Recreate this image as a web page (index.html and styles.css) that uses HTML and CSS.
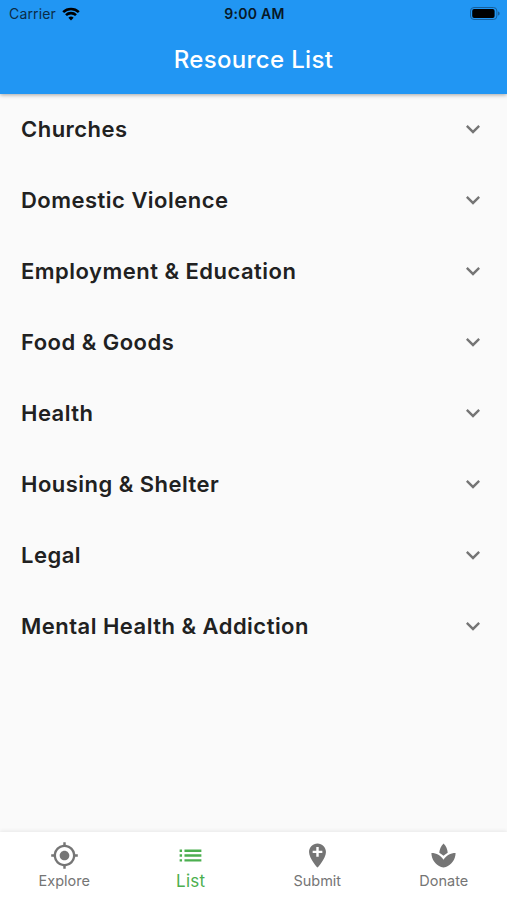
FILE: index.html
```html
<!DOCTYPE html>
<html lang="en">
<head>
    <meta charset="UTF-8">
    <title>Resource List</title>
    <link rel="stylesheet" href="styles.css">
</head>
<body>
<div class="header">
    <div class="status">
        <div class="carrier">
            <span>Carrier</span>
            <svg class="wifi" viewBox="0 0 18 14">
                <path d="M1.2 5.1a11.3 11.3 0 0 1 15.6 0M4 8.1a7.2 7.2 0 0 1 10 0"/>
                <path class="dot" d="M9 13.6l-2.6-2.8a3.8 3.8 0 0 1 5.2 0z"/>
            </svg>
        </div>
        <div class="time">9:00 AM</div>
        <svg class="battery" viewBox="0 0 30 13">
            <rect class="shell" x=".5" y=".5" width="26.4" height="12" rx="3.5"/>
            <rect x="2.2" y="2" width="22.4" height="9" rx="2"/>
            <path class="cap" d="M28 4.5c2.2.6 2.2 3.4 0 4z"/>
        </svg>
    </div>
    <h1 class="title">Resource List</h1>
</div>
<ul class="list">
    <li><span>Churches</span><svg viewBox="0 0 24 24"><path d="M16.59 8.59L12 13.17 7.41 8.59 6 10l6 6 6-6z"/></svg></li>
    <li><span>Domestic Violence</span><svg viewBox="0 0 24 24"><path d="M16.59 8.59L12 13.17 7.41 8.59 6 10l6 6 6-6z"/></svg></li>
    <li><span>Employment &amp; Education</span><svg viewBox="0 0 24 24"><path d="M16.59 8.59L12 13.17 7.41 8.59 6 10l6 6 6-6z"/></svg></li>
    <li><span>Food &amp; Goods</span><svg viewBox="0 0 24 24"><path d="M16.59 8.59L12 13.17 7.41 8.59 6 10l6 6 6-6z"/></svg></li>
    <li><span>Health</span><svg viewBox="0 0 24 24"><path d="M16.59 8.59L12 13.17 7.41 8.59 6 10l6 6 6-6z"/></svg></li>
    <li><span>Housing &amp; Shelter</span><svg viewBox="0 0 24 24"><path d="M16.59 8.59L12 13.17 7.41 8.59 6 10l6 6 6-6z"/></svg></li>
    <li><span>Legal</span><svg viewBox="0 0 24 24"><path d="M16.59 8.59L12 13.17 7.41 8.59 6 10l6 6 6-6z"/></svg></li>
    <li><span>Mental Health &amp; Addiction</span><svg viewBox="0 0 24 24"><path d="M16.59 8.59L12 13.17 7.41 8.59 6 10l6 6 6-6z"/></svg></li>
</ul>
<div class="tabs">
    <a class="tab">
        <svg viewBox="0 0 24 24"><path d="M12 8c-2.21 0-4 1.79-4 4s1.79 4 4 4 4-1.79 4-4-1.79-4-4-4zm8.94 3A8.994 8.994 0 0 0 13 3.06V1h-2v2.06A8.994 8.994 0 0 0 3.06 11H1v2h2.06A8.994 8.994 0 0 0 11 20.94V23h2v-2.06A8.994 8.994 0 0 0 20.94 13H23v-2h-2.06zM12 19c-3.87 0-7-3.13-7-7s3.13-7 7-7 7 3.13 7 7-3.13 7-7 7z"/></svg>
        <span>Explore</span>
    </a>
    <a class="tab current">
        <svg viewBox="0 0 24 24"><path d="M3 13h2v-2H3v2zm0 4h2v-2H3v2zm0-8h2V7H3v2zm4 4h14v-2H7v2zm0 4h14v-2H7v2zM7 7v2h14V7H7z"/></svg>
        <span>List</span>
    </a>
    <a class="tab">
        <svg viewBox="0 0 24 24"><path d="M12 2C8.14 2 5 5.14 5 9c0 5.25 7 13 7 13s7-7.75 7-13c0-3.86-3.14-7-7-7zm4 8h-3v3h-2v-3H8V8h3V5h2v3h3v2z"/></svg>
        <span>Submit</span>
    </a>
    <a class="tab">
        <svg viewBox="0 0 24 24"><path d="M15.49 9.63c-.18-2.79-1.31-5.51-3.43-7.63-2.14 2.14-3.32 4.86-3.55 7.63 1.28.68 2.46 1.56 3.49 2.63 1.03-1.06 2.21-1.94 3.49-2.63zM12 15.45C9.85 12.17 6.18 10 2 10c0 5.32 3.36 9.82 8.03 11.49.63.23 1.29.4 1.97.51.68-.12 1.33-.29 1.97-.51C18.64 19.82 22 15.32 22 10c-4.18 0-7.85 2.17-10 5.45z"/></svg>
        <span>Donate</span>
    </a>
</div>
</body>
</html>
```
FILE: styles.css
```css
* {
    margin: 0;
    padding: 0;
    box-sizing: border-box;
}

body {
    display: flex;
    flex-direction: column;
    height: 900px;
    overflow: hidden;
    background-color: #fafafa;
    font-family: Inter, "Liberation Sans", sans-serif;
}

svg {
    display: block;
    fill: currentColor;
}

.header {
    height: 94px;
    background-color: #2196f3;
    box-shadow: 0 1px 4px rgba(0, 0, 0, .35);
}

.status {
    display: grid;
    grid-template-columns: 1fr auto 1fr;
    align-items: center;
    height: 27px;
    padding: 0 7px 0 9px;
    color: #071827;
    font-size: 14px;
}

.carrier {
    display: flex;
    align-items: center;
    gap: 6px;
    color: #0b2c47;
    letter-spacing: .15px;
}

.wifi {
    width: 18px;
    height: 14px;
    fill: none;
    stroke: #000;
    stroke-width: 2.6;
}

.wifi .dot {
    fill: #000;
    stroke: none;
}

.time {
    font-weight: 600;
    letter-spacing: .3px;
}

.battery {
    justify-self: end;
    width: 30px;
    height: 13px;
    fill: #000;
}

.battery .shell {
    fill: none;
    stroke: #165f9b;
}

.battery .cap {
    fill: #165f9b;
}

.title {
    height: 66px;
    line-height: 66px;
    text-align: center;
    color: #fff;
    font-size: 24px;
    font-weight: 500;
    letter-spacing: .35px;
}

.list {
    flex: 1;
    list-style-type: none;
}

.list li {
    display: flex;
    align-items: center;
    justify-content: space-between;
    height: 70.9px;
    padding: 0 20px 0 21px;
    color: #212121;
    font-size: 22px;
    font-weight: 600;
    letter-spacing: .48px;
}

.list svg {
    width: 28px;
    height: 28px;
    color: #757575;
}

.tabs {
    display: flex;
    height: 68px;
    padding-left: 1px;
    background-color: #fff;
    box-shadow: 0 -1px 4px rgba(0, 0, 0, .08);
}

.tab {
    flex: 1;
    display: flex;
    flex-direction: column;
    align-items: center;
    padding-top: 9px;
    color: #757575;
    font-size: 14.5px;
}

.tab svg {
    width: 29px;
    height: 29px;
}

.tab span {
    line-height: 22px;
}

.current {
    color: #4caf50;
    font-size: 17px;
    letter-spacing: .3px;
}
```
